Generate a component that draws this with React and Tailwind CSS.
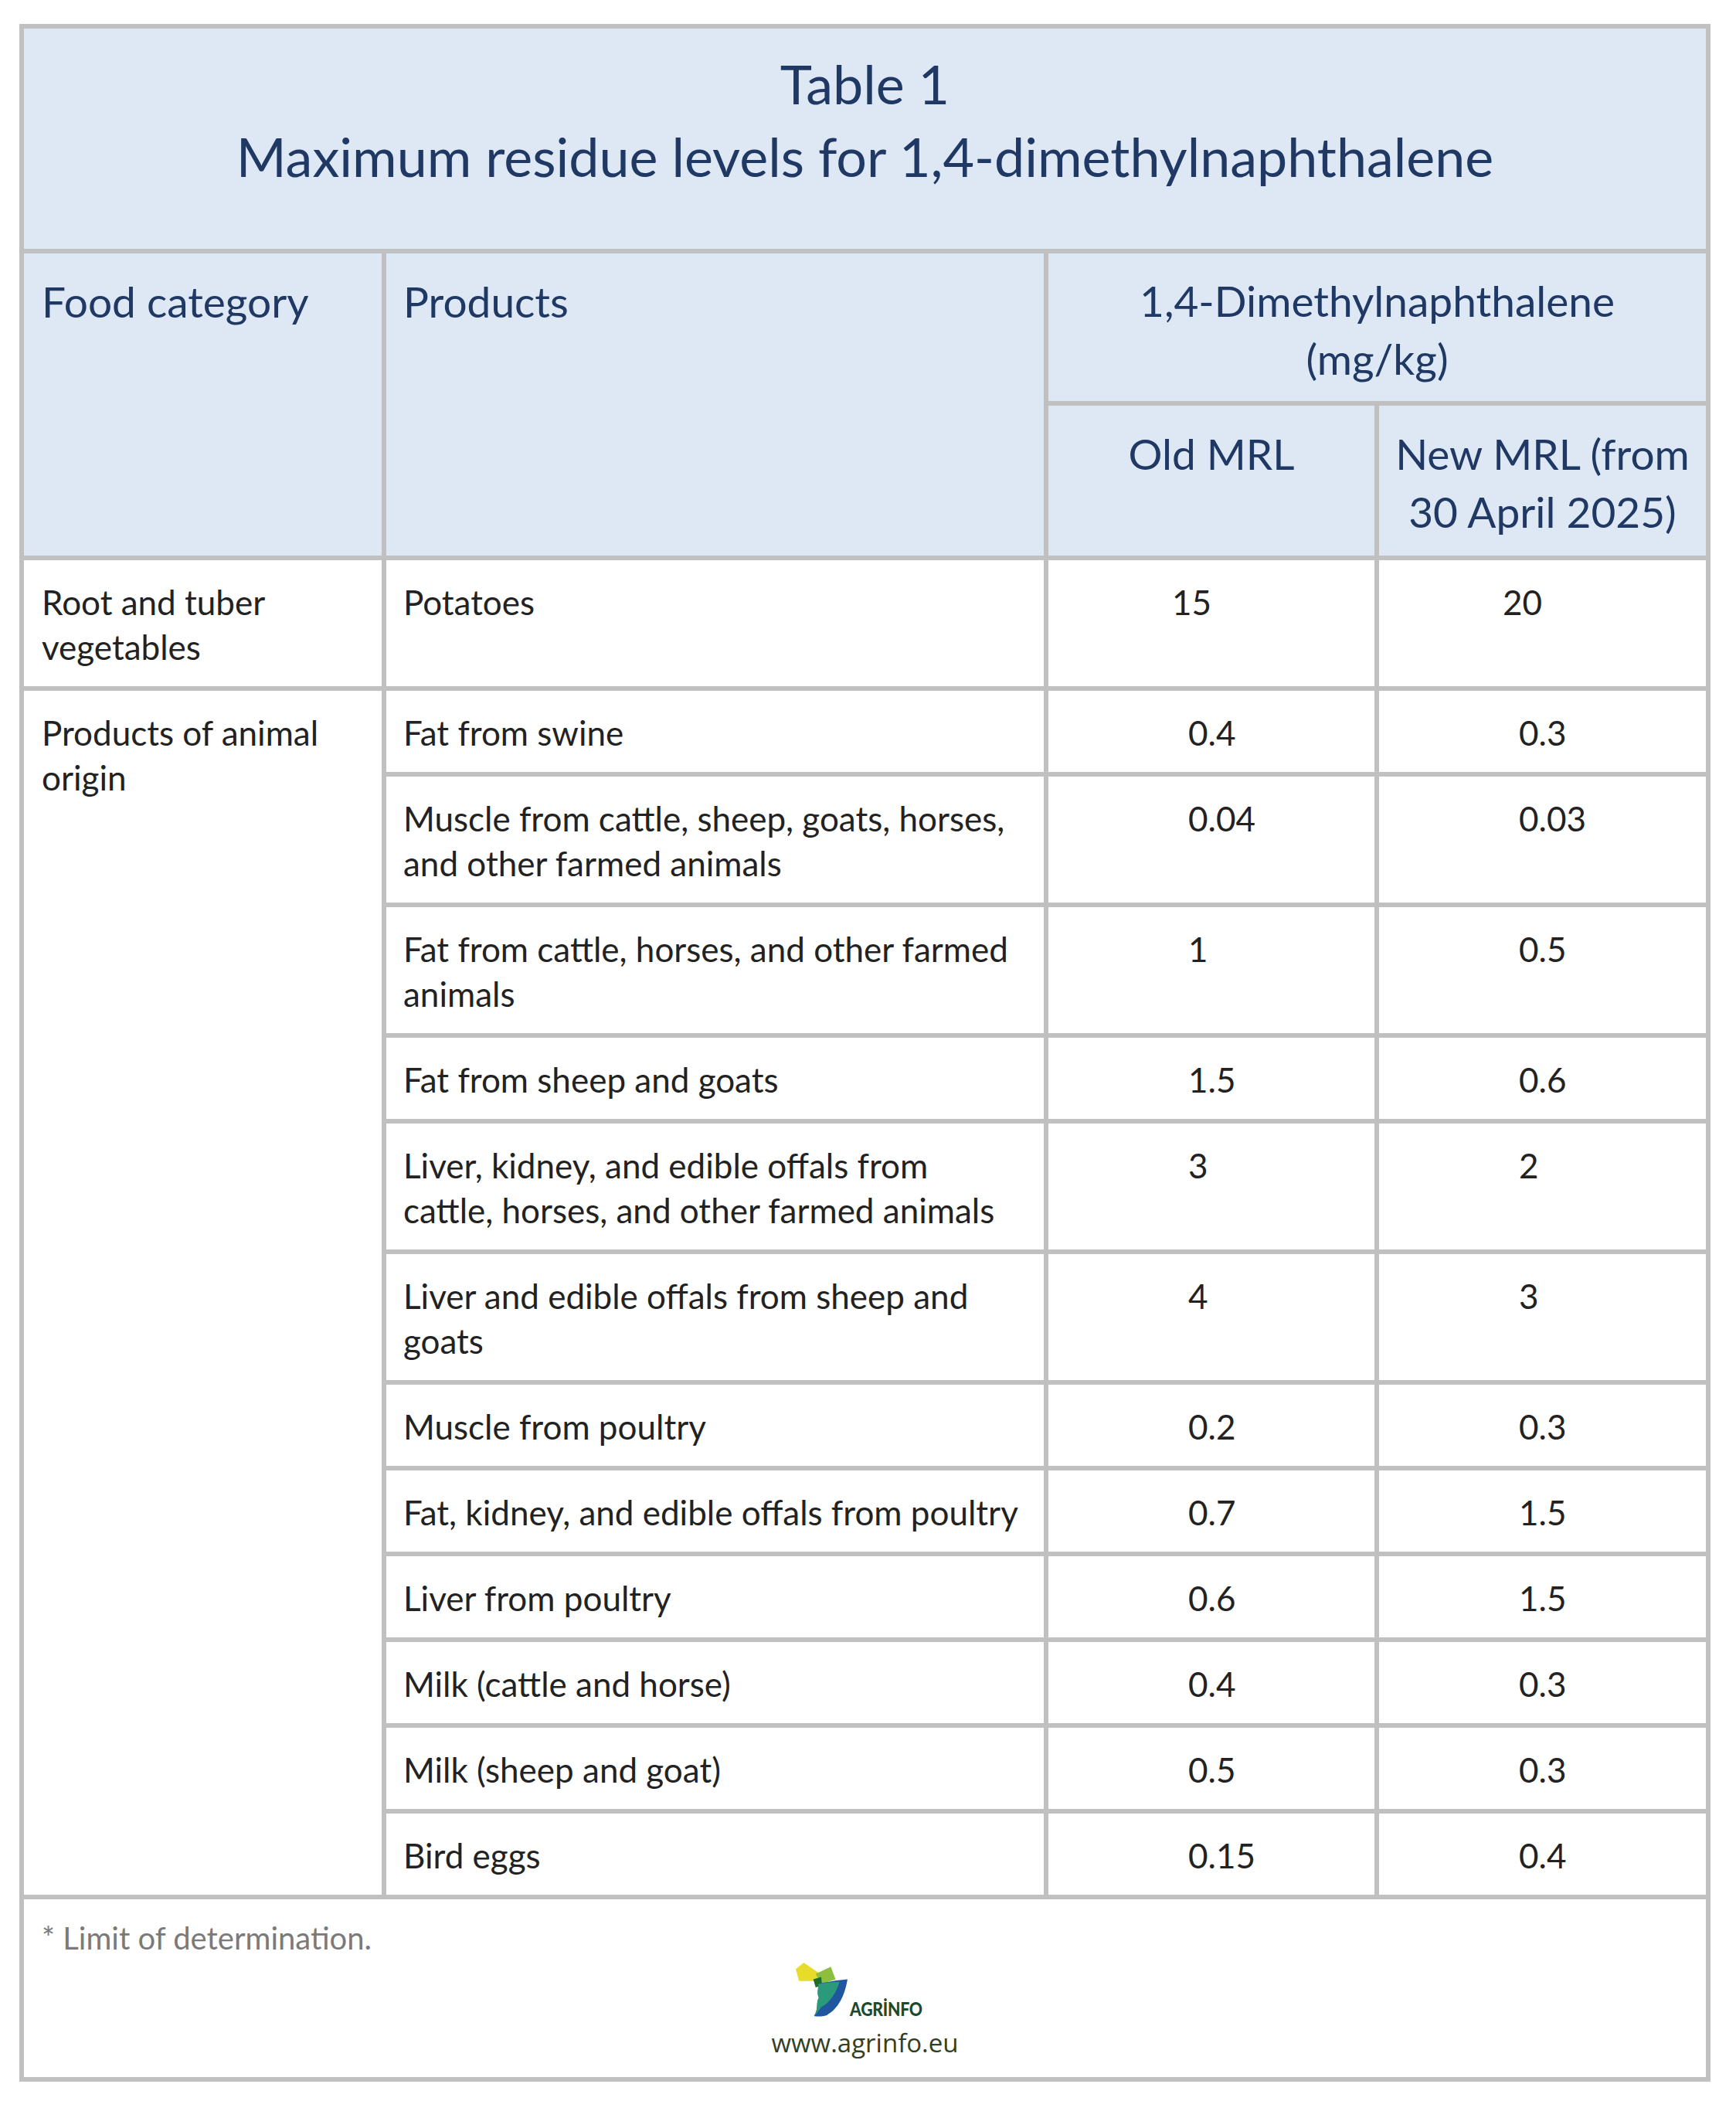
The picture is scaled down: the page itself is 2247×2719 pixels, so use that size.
import React from "react";

const rows = [
  ["Fat from swine", "0.4", "0.3"],
  ["Muscle from cattle, sheep, goats, horses,|and other farmed animals", "0.04", "0.03"],
  ["Fat from cattle, horses, and other farmed|animals", "1", "0.5"],
  ["Fat from sheep and goats", "1.5", "0.6"],
  ["Liver, kidney, and edible offals from|cattle, horses, and other farmed animals", "3", "2"],
  ["Liver and edible offals from sheep and|goats", "4", "3"],
  ["Muscle from poultry", "0.2", "0.3"],
  ["Fat, kidney, and edible offals from poultry", "0.7", "1.5"],
  ["Liver from poultry", "0.6", "1.5"],
  ["Milk (cattle and horse)", "0.4", "0.3"],
  ["Milk (sheep and goat)", "0.5", "0.3"],
  ["Bird eggs", "0.15", "0.4"],
];

function Lines({ text }) {
  const parts = text.split("|");
  return (
    <>
      {parts.map((p, i) => (
        <React.Fragment key={i}>
          {i > 0 && <br />}
          {p}
        </React.Fragment>
      ))}
    </>
  );
}

function Logo() {
  return (
    <div className="flex items-end">
      <svg width="70" height="72" viewBox="0 0 68 70">
        <polygon points="1,8 11,0 30,13 28,23 5,23" fill="#e8dc2a" />
        <polygon points="26,14 45,5 51,21 33,27" fill="#8cbf3f" />
        <polygon points="23,21 33,18 34,29 26,31" fill="#1f6b2e" />
        <path d="M29,27 C40,24 55,22 66,21 C63,40 55,58 40,66 C34,68 28,68 24,67 C30,58 26,50 30,44 C27,38 30,32 29,27 Z" fill="#1f56a0" />
        <path d="M29,27 C38,25 48,24 56,24 C52,38 44,50 33,56 C30,60 28,64 24,67 C30,58 26,50 30,44 C27,38 30,32 29,27 Z" fill="#2a9a7a" />
      </svg>
      <span className="mb-[2px] ml-[1px] inline-block origin-left scale-x-[0.85] text-[25px] leading-[22px] font-black tracking-[-0.3px] text-[#1d4a2e] font-['Lato',sans-serif]">
        AGRİNFO
      </span>
    </div>
  );
}

export default function App() {
  const head = "bg-[#dde8f4] text-[#1f3864] text-[55px] leading-[75px]";
  const body = "bg-white text-[#222222] text-[44px] leading-[58px] pt-[25px] pb-[22px]";
  return (
    <div className="bg-white min-h-[2719px] pl-[25px] pt-[31px] font-['Lato','Liberation_Sans',sans-serif]">
      <div className="inline-grid grid-cols-[463px_851px_422px_423px] gap-[6px] bg-[#c0c0c0] p-[6px]">
        <div className="col-span-4 bg-[#dde8f4] text-[#1f3864] text-center text-[70px] leading-[94px] pt-[24px] pb-[73px]">
          Table 1
          <br />
          Maximum residue levels for 1,4-dimethylnaphthalene
        </div>

        <div className={`${head} row-span-2 px-[23px] pt-[25px]`}>Food category</div>
        <div className={`${head} row-span-2 px-[22px] pt-[25px]`}>Products</div>
        <div className={`${head} col-span-2 text-center pt-[24px] pb-[17px]`}>
          1,4-Dimethylnaphthalene
          <br />
          (mg/kg)
        </div>
        <div className={`${head} text-center pt-[25px] pb-[19px]`}>Old MRL</div>
        <div className={`${head} text-center pt-[25px] pb-[19px]`}>
          New MRL (from
          <br />
          30 April 2025)
        </div>

        <div className={`${body} px-[23px]`}>
          Root and tuber
          <br />
          vegetables
        </div>
        <div className={`${body} px-[22px]`}>Potatoes</div>
        <div className={`${body} pl-[160px]`}>15</div>
        <div className={`${body} pl-[160px]`}>20</div>

        <div className={`${body} row-span-12 px-[23px]`}>
          Products of animal
          <br />
          origin
        </div>
        {rows.map((r, i) => (
          <React.Fragment key={i}>
            <div className={`${body} px-[22px] whitespace-nowrap`}>
              <Lines text={r[0]} />
            </div>
            <div className={`${body} pl-[181px]`}>{r[1]}</div>
            <div className={`${body} pl-[181px]`}>{r[2]}</div>
          </React.Fragment>
        ))}

        <div className="col-span-4 bg-white pt-[22px] pb-[24px]">
          <div className="px-[23px] text-[40px] leading-[56px] text-[#7a7a7a]">* Limit of determination.</div>
          <div className="mt-[4px] flex justify-center">
            <Logo />
          </div>
          <div className="mt-[12px] text-center text-[33px] leading-[40px] text-[#33401f] font-['Open_Sans',sans-serif]">
            www.agrinfo.eu
          </div>
        </div>
      </div>
    </div>
  );
}
